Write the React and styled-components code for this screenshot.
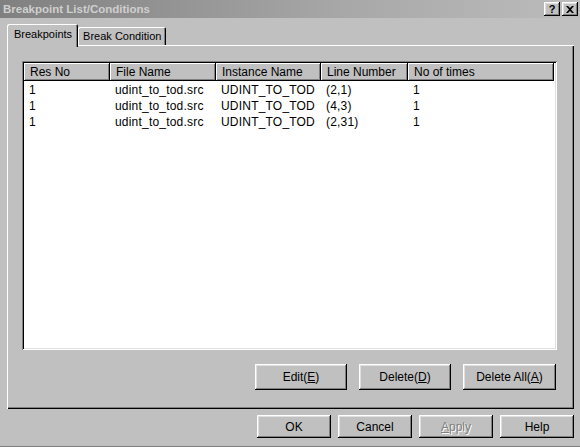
import React from "react";
import styled, { createGlobalStyle } from "styled-components";

const Global = createGlobalStyle`
  html, body { margin: 0; padding: 0; background: #c0c0c0; }
  body { font-family: "Liberation Sans", Arial, sans-serif; }
`;

const Window = styled.div`
  width: 580px;
  height: 447px;
  background: #c0c0c0;
  display: flex;
  flex-direction: column;
  box-sizing: border-box;
  border-bottom: 1px solid #808080;
  font-family: "Liberation Sans", Arial, sans-serif;
  font-size: 12px;
  color: #000;
  overflow: hidden;
`;

const TitleBar = styled.div`
  height: 18px;
  flex: none;
  display: flex;
  align-items: center;
  justify-content: space-between;
  padding: 0 2px 0 3px;
  background: linear-gradient(to right, #808080 0%, #a8a8a8 60%, #bcbcbc 100%);
`;

const Title = styled.span`
  font-weight: bold;
  font-size: 11.5px;
  color: #cfcfcf;
`;

const TitleButtons = styled.div`
  display: flex;
  gap: 2px;
`;

const TitleButton = styled.div`
  width: 16px;
  height: 14px;
  background: #c0c0c0;
  box-shadow: inset -1px -1px #000, inset 1px 1px #fff, inset -2px -2px #808080, inset 2px 2px #dfdfdf;
  display: flex;
  align-items: center;
  justify-content: center;
  font-weight: bold;
  font-size: 11px;
  line-height: 1;
  color: #000;
`;

const Body = styled.div`
  padding: 6px 6px 0 7px;
  display: flex;
  flex-direction: column;
`;

const TabRow = styled.div`
  height: 21px;
  display: flex;
  align-items: flex-end;
`;

const Tab = styled.div`
  position: relative;
  z-index: ${(p) => (p.$active ? 2 : 1)};
  height: ${(p) => (p.$active ? "23px" : "18px")};
  margin-bottom: ${(p) => (p.$active ? "-2px" : "0")};
  padding: ${(p) => (p.$active ? "3px 6px 0 7px" : "2px 5px 0 5px")};
  box-sizing: border-box;
  background: #c0c0c0;
  border-top-left-radius: 2px;
  border-top-right-radius: 2px;
  box-shadow: inset 1px 1px #fff, inset -1px 0 #000, inset -2px 0 #808080;
  white-space: nowrap;
  font-size: 11px;
  line-height: 15px;
`;

const Panel = styled.div`
  height: 364px;
  box-sizing: border-box;
  padding: 16px 17px 19px 15px;
  background: #c0c0c0;
  box-shadow: inset 1px 1px #fff, inset -1px -1px #000, inset -2px -2px #808080;
  display: flex;
  flex-direction: column;
`;

const ListView = styled.div`
  height: 289px;
  flex: none;
  box-sizing: border-box;
  padding: 2px;
  background: #fff;
  box-shadow: inset 1px 1px #808080, inset -1px -1px #fff, inset 2px 2px #000, inset -2px -2px #dfdfdf;
  overflow: hidden;
`;

const HeaderRow = styled.div`
  display: flex;
  height: 18px;
`;

const HeaderCell = styled.div`
  width: ${(p) => p.$w}px;
  flex: none;
  box-sizing: border-box;
  padding-left: 6px;
  background: #c0c0c0;
  box-shadow: inset -1px -1px #000, inset 1px 1px #fff, inset -2px -2px #808080;
  line-height: 18px;
  white-space: nowrap;
  overflow: hidden;
`;

const Row = styled.div`
  display: flex;
  height: 16px;
`;

const Cell = styled.div`
  width: ${(p) => p.$w}px;
  flex: none;
  box-sizing: border-box;
  padding-left: 5px;
  line-height: 16px;
  white-space: nowrap;
  letter-spacing: 0.2px;
`;

const Rows = styled.div`
  display: flex;
  flex-direction: column;
  padding-top: 1px;
`;

const ButtonRow = styled.div`
  margin-top: 14px;
  display: flex;
  justify-content: flex-end;
  gap: 12px;
  padding-right: 1px;
`;

const Button = styled.div`
  width: ${(p) => p.$w}px;
  height: ${(p) => p.$h}px;
  box-sizing: border-box;
  background: #c0c0c0;
  box-shadow: inset -1px -1px #000, inset 1px 1px #fff, inset -2px -2px #808080, inset 2px 2px #dfdfdf;
  display: flex;
  align-items: center;
  justify-content: center;
  color: ${(p) => (p.$disabled ? "#808080" : "#000")};
  text-shadow: ${(p) => (p.$disabled ? "1px 1px #fff" : "none")};
  white-space: nowrap;
`;

const Footer = styled.div`
  margin-top: 6px;
  display: flex;
  justify-content: flex-end;
  gap: 7px;
`;

const cols = [
  { name: "Res No", w: 86 },
  { name: "File Name", w: 106 },
  { name: "Instance Name", w: 105 },
  { name: "Line Number", w: 87 },
  { name: "No of times", w: 146 },
];

const data = [
  ["1", "udint_to_tod.src", "UDINT_TO_TOD", "(2,1)", "1"],
  ["1", "udint_to_tod.src", "UDINT_TO_TOD", "(4,3)", "1"],
  ["1", "udint_to_tod.src", "UDINT_TO_TOD", "(2,31)", "1"],
];

export default function App() {
  return (
    <>
      <Global />
      <Window>
        <TitleBar>
          <Title>Breakpoint List/Conditions</Title>
          <TitleButtons>
            <TitleButton>?</TitleButton>
            <TitleButton>
              <svg width="8" height="7" viewBox="0 0 8 7">
                <path d="M0 0h2l2 2 2-2h2L5 3.5 8 7H6L4 5 2 7H0l3-3.5z" fill="#000" />
              </svg>
            </TitleButton>
          </TitleButtons>
        </TitleBar>
        <Body>
          <TabRow>
            <Tab $active>Breakpoints</Tab>
            <Tab>Break Condition</Tab>
          </TabRow>
          <Panel>
            <ListView>
              <HeaderRow>
                {cols.map((c) => (
                  <HeaderCell key={c.name} $w={c.w}>{c.name}</HeaderCell>
                ))}
              </HeaderRow>
              <Rows>
                {data.map((r, i) => (
                  <Row key={i}>
                    {r.map((v, j) => (
                      <Cell key={j} $w={cols[j].w}>{v}</Cell>
                    ))}
                  </Row>
                ))}
              </Rows>
            </ListView>
            <ButtonRow>
              <Button $w={92} $h={26}>Edit(<u>E</u>)</Button>
              <Button $w={92} $h={26}>Delete(<u>D</u>)</Button>
              <Button $w={93} $h={26}>Delete All(<u>A</u>)</Button>
            </ButtonRow>
          </Panel>
          <Footer>
            <Button $w={74} $h={23}>OK</Button>
            <Button $w={74} $h={23}>Cancel</Button>
            <Button $w={74} $h={23} $disabled><u>A</u>pply</Button>
            <Button $w={74} $h={23}>Help</Button>
          </Footer>
        </Body>
      </Window>
    </>
  );
}
